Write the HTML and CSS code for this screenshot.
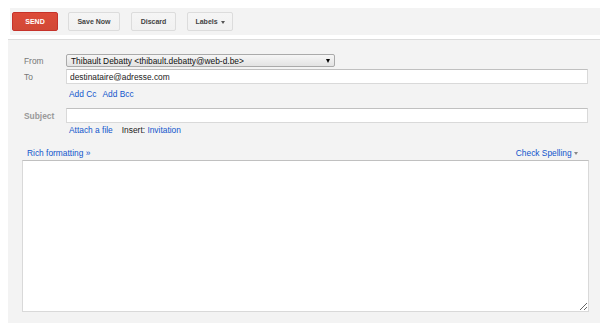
FILE: index.html
```html
<!DOCTYPE html>
<html lang="en">
<head>
  <meta charset="UTF-8" />
  <title>Compose</title>
  <link rel="stylesheet" href="styles.css">
</head>
<body>

  <!-- Toolbar -->
  <div class="toolbar">
    <button class="btn btn-send">SEND</button>
    <button class="btn btn-save">Save Now</button>
    <button class="btn btn-discard">Discard</button>
    <button class="btn btn-labels">Labels <span class="caret"></span></button>
  </div>

  <!-- Compose -->
  <div class="compose">
    <div class="fields">
      <label class="field-label">From</label>
      <div class="select">
        <span>Thibault Debatty &lt;thibault.debatty@web-d.be&gt;</span>
        <span class="select-arrow"></span>
      </div>

      <label class="field-label to-label">To</label>
      <input class="text-input to-input" type="text" value="destinataire@adresse.com" />

      <span></span>
      <div class="links">
        <a href="#">Add Cc</a>
        <a href="#">Add Bcc</a>
      </div>

      <label class="field-label subject-label">Subject</label>
      <input class="text-input" type="text" />

      <span></span>
      <div class="links links-attach">
        <a href="#">Attach a file</a>
        <span class="insert">Insert: <a href="#">Invitation</a></span>
      </div>
    </div>

    <div class="editor-bar">
      <a href="#">Rich formatting »</a>
      <a href="#" class="spell">Check Spelling <span class="caret light"></span></a>
    </div>
    <textarea class="editor"></textarea>
  </div>

</body>
</html>
```

FILE: styles.css
```css
body {
  font-family: Arial, "Liberation Sans", sans-serif;
  font-size: 8.4px;
  color: #222;
  background: #fff;
  margin: 0;
  overflow: hidden;
}

a {
  color: #1155cc;
  text-decoration: none;
}

.toolbar {
  display: flex;
  align-items: center;
  margin: 8px 0 0 10px;
  height: 27px;
  padding-left: 2px;
  background: #f3f3f3;
}

.btn {
  font-family: inherit;
  font-size: 7px;
  font-weight: bold;
  height: 19px;
  padding: 0;
  color: #444;
  background: linear-gradient(#f5f5f5, #f1f1f1);
  border: 1px solid #dcdcdc;
  border-radius: 2px;
  margin-right: 11px;
}

.btn-send {
  width: 46px;
  margin-right: 10px;
  color: #fff;
  background: linear-gradient(#dd4b39, #d14836);
  border-color: #c6322a;
}

.btn-save {
  width: 52px;
}

.btn-discard {
  width: 45px;
}

.btn-labels {
  width: 46px;
}

.caret {
  display: inline-block;
  width: 0;
  height: 0;
  border-left: 2.5px solid transparent;
  border-right: 2.5px solid transparent;
  border-top: 3px solid #555;
  vertical-align: middle;
  margin-left: 1px;
}

.caret.light {
  border-top-color: #888;
  margin-left: 0;
}

.compose {
  margin: 4px 0 0 8px;
  height: 284px;
  box-sizing: border-box;
  border-top: 1px solid #dcdcdc;
  background: #f3f3f3;
  padding: 14px 12px 0 14px;
}

.fields {
  display: grid;
  grid-template-columns: 44px 1fr;
  align-items: center;
}

.field-label {
  color: #777;
  padding-left: 2px;
}

.to-label,
.to-input {
  margin-top: 2px;
}

.subject-label {
  font-weight: bold;
  color: #999;
}

.select {
  display: flex;
  justify-content: space-between;
  align-items: center;
  box-sizing: border-box;
  width: 269px;
  height: 13px;
  padding: 0 4px 0 4px;
  border: 1px solid #aaa;
  border-radius: 2px;
  background: linear-gradient(#f6f6f6, #e3e3e3);
  color: #111;
}

.select-arrow {
  width: 0;
  height: 0;
  border-left: 2.5px solid transparent;
  border-right: 2.5px solid transparent;
  border-top: 4px solid #000;
}

.text-input {
  font-family: inherit;
  font-size: 8.4px;
  color: #222;
  box-sizing: border-box;
  height: 15px;
  padding: 0 3px;
  border: 1px solid #d9d9d9;
  border-top-color: #c0c0c0;
  background: #fff;
  outline: none;
}

.links {
  display: flex;
  gap: 6px;
  padding-left: 3px;
  height: 12px;
  align-items: center;
  margin: 4px 0 8px;
}

.links-attach {
  margin-top: 1px;
}

.insert {
  margin-left: 3px;
  color: #222;
}

.editor-bar {
  display: flex;
  justify-content: space-between;
  align-items: center;
  height: 12px;
  margin: 3px 0 1px;
  padding: 0 10px 0 5px;
}

.editor {
  display: block;
  box-sizing: border-box;
  width: 567px;
  height: 152px;
  margin: 0;
  border: 1px solid #d9d9d9;
  border-top-color: #c0c0c0;
  background: #fff;
  font-family: inherit;
  font-size: 8.4px;
  resize: both;
}
```
